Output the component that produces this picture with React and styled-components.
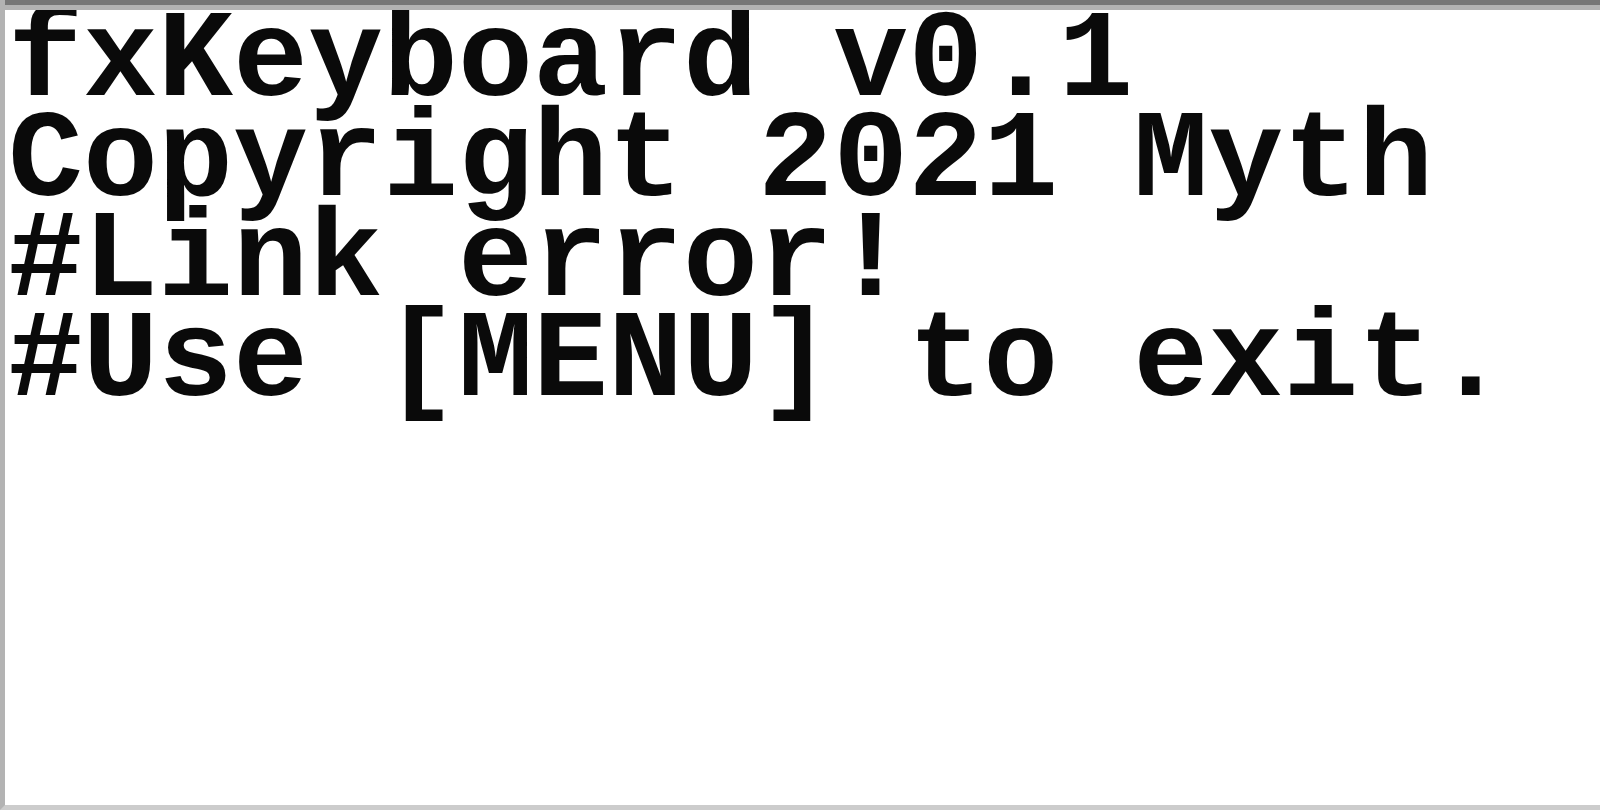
import React from "react";
import styled, { createGlobalStyle } from "styled-components";

const Global = createGlobalStyle`
  html, body {
    margin: 0;
    padding: 0;
    background: #ffffff;
    overflow: hidden;
  }
`;

const Screen = styled.div`
  position: relative;
  box-sizing: border-box;
  width: 1600px;
  height: 810px;
  background: #ffffff;
  border-left: 5px solid #b3b3b3;
  border-bottom: 5px solid #cccccc;
  overflow: hidden;

  &::before {
    content: "";
    position: absolute;
    left: -5px;
    right: 0;
    top: 0;
    height: 5px;
    background: #777777;
    border-bottom: 5px solid #b3b3b3;
    z-index: 1;
  }
`;

const Console = styled.div`
  display: flex;
  flex-direction: column;
  padding: 12px 0 0 3px;
`;

const Line = styled.div`
  font-family: "Liberation Mono", "DejaVu Sans Mono", monospace;
  font-weight: 700;
  font-size: 125px;
  line-height: 100px;
  height: 100px;
  color: #0a0a0a;
  white-space: pre;
  letter-spacing: 0;
`;

const lines = [
  "fxKeyboard v0.1",
  "Copyright 2021 Myth",
  "#Link error!",
  "#Use [MENU] to exit.",
];

export default function App() {
  return (
    <>
      <Global />
      <Screen>
        <Console>
          {lines.map((l, i) => (
            <Line key={i}>{l}</Line>
          ))}
        </Console>
      </Screen>
    </>
  );
}
